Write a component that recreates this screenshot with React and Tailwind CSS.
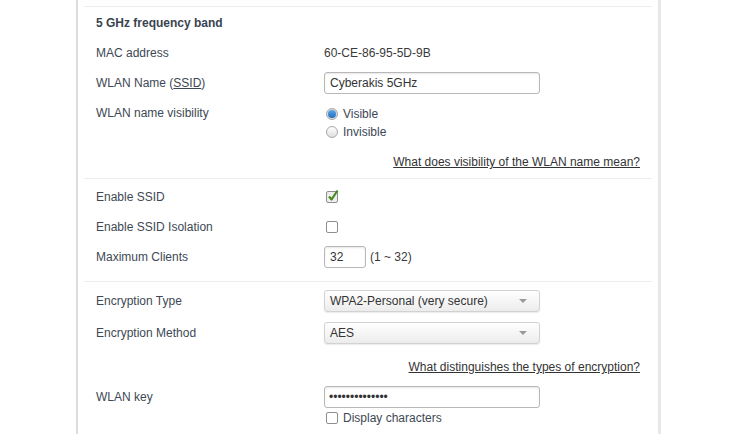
import React from 'react';

const font = { fontFamily: '"Liberation Sans", Arial, sans-serif' };

const Sep = () => <div className="h-px bg-[#ececec]" />;

const Row = ({ label, children, h = 'h-[30px]' }) => (
    <div className={`flex items-center ${h}`}>
        <div className="w-[240px] pl-3 shrink-0">{label}</div>
        <div className="flex items-center">{children}</div>
    </div>
);

const TextBox = ({ value, width = 'w-[216px]', mono }) => (
    <div className={`${width} h-[22px] border border-[#b8b8b8] rounded-[3px] bg-white shadow-[inset_0_1px_2px_rgba(0,0,0,0.1)] flex items-center px-[5px] text-[#333] ${mono ? 'text-[12px] pl-[4px]' : ''}`}>
        {value}
    </div>
);

const Select = ({ value }) => (
    <div className="w-[216px] h-[22px] border border-[#d2d2d2] rounded-[3px] bg-gradient-to-b from-white to-[#ececec] shadow-[0_1px_1px_rgba(0,0,0,0.08)] flex items-center justify-between pl-[5px] pr-[12px] text-[#333]">
        <span>{value}</span>
        <span className="w-0 h-0 border-l-[4px] border-r-[4px] border-t-[4px] border-l-transparent border-r-transparent border-t-[#999]" />
    </div>
);

const Radio = ({ checked, label }) => (
    <div className="flex items-center h-[18px]">
        <span className={`w-[12px] h-[12px] rounded-full border border-[#a8a8a8] flex items-center justify-center ml-[2px] mr-[5px] ${checked ? 'bg-[#dcdcdc]' : 'bg-gradient-to-b from-white to-[#dedede]'}`}>
            {checked && <span className="w-[8px] h-[8px] rounded-full bg-gradient-to-b from-[#5aa6e8] to-[#1f6fbf]" />}
        </span>
        <span>{label}</span>
    </div>
);

const Check = ({ checked }) => (
    <span className={`relative w-[12px] h-[12px] border border-[#8f8f8f] rounded-[2px] inline-block ml-[2px] ${checked ? 'bg-[#eeeeee]' : 'bg-white'}`}>
        {checked && (
            <svg className="absolute -top-[3px] left-[0px]" width="12" height="13" viewBox="0 0 12 13">
                <path d="M2 7.5 L4.6 10.5 L10.5 1.5" fill="none" stroke="#4a8a24" strokeWidth="2.2" strokeLinejoin="round" />
            </svg>
        )}
    </span>
);

const Link = ({ children }) => (
    <div className="flex justify-end pr-3 h-[18px] items-center">
        <a className="underline text-[#333] cursor-pointer">{children}</a>
    </div>
);

export default function App() {
    return (
        <div className="w-[750px] h-[434px] bg-white overflow-hidden" style={font}>
            <div className="ml-[76px] w-[585px] h-full border-l-2 border-[#dcdcdc] border-r-[3px] border-r-[#e8e8e8] px-[6px] text-[12px] text-[#3e4854]">
                <div className="h-[6px]" />
                <Sep />
                <div className="h-px" />
                <div className="h-[30px] flex items-center pl-3 font-bold text-[#3a4450]">5 GHz frequency band</div>
                <Row label="MAC address">
                    <span className="text-[#3a3a3a]">60-CE-86-95-5D-9B</span>
                </Row>
                <Row label={<span>WLAN Name (<span className="underline">SSID</span>)</span>}>
                    <TextBox value="Cyberakis 5GHz" />
                </Row>
                <div className="flex items-start">
                    <div className="w-[240px] pl-3 h-[30px] flex items-center">WLAN name visibility</div>
                    <div className="pt-[7px]">
                        <Radio checked label="Visible" />
                        <Radio label="Invisible" />
                    </div>
                </div>
                <div className="h-[12px]" />
                <Link>What does visibility of the WLAN name mean?</Link>
                <div className="h-[7px]" />
                <Sep />
                <div className="h-[3px]" />
                <Row label="Enable SSID"><Check checked /></Row>
                <Row label="Enable SSID Isolation"><Check /></Row>
                <Row label="Maximum Clients">
                    <TextBox value="32" width="w-[42px]" />
                    <span className="ml-[4px] text-[#3a3a3a]">(1 ~ 32)</span>
                </Row>
                <div className="h-[9px]" />
                <Sep />
                <div className="h-[3px]" />
                <Row label="Encryption Type" h="h-[32px]"><Select value="WPA2-Personal (very secure)" /></Row>
                <Row label="Encryption Method" h="h-[32px]"><Select value="AES" /></Row>
                <div className="h-[9px]" />
                <Link>What distinguishes the types of encryption?</Link>
                <div className="h-[10px]" />
                <div className="flex items-start">
                    <div className="w-[240px] pl-3 h-[22px] flex items-center">WLAN key</div>
                    <div>
                        <TextBox value="••••••••••••••" mono />
                        <div className="flex items-center h-[20px] gap-[5px]">
                            <Check />
                            <span>Display characters</span>
                        </div>
                    </div>
                </div>
            </div>
        </div>
    );
}
